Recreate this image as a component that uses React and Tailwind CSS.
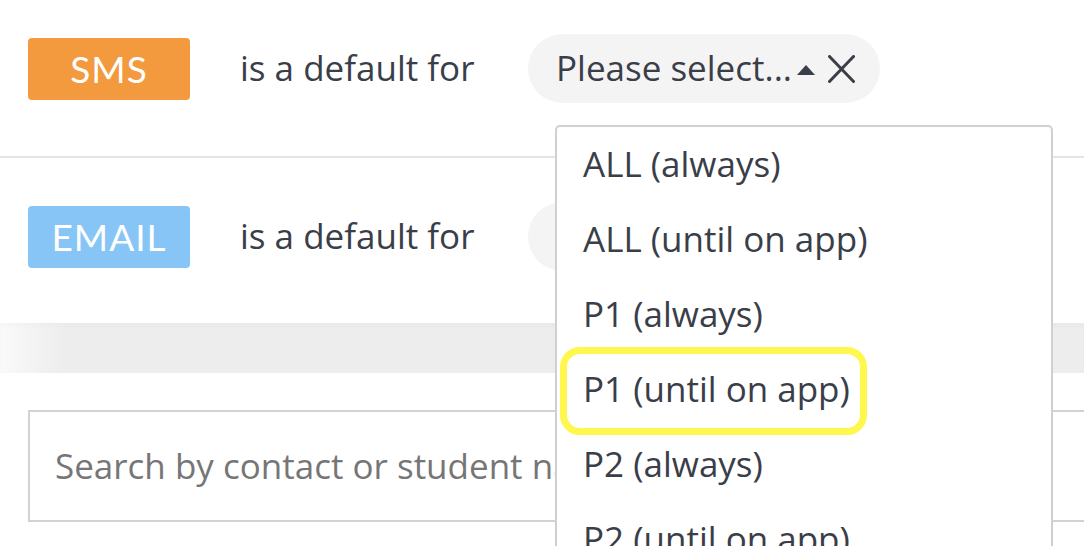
const OPTIONS = [
  'ALL (always)',
  'ALL (until on app)',
  'P1 (always)',
  'P1 (until on app)',
  'P2 (always)',
  'P2 (until on app)',
]

function Badge({ label, color }) {
  return (
    <div
      className={`${color} w-[162px] h-[62px] rounded-[4px] flex items-center justify-center text-white text-[37px] tracking-[1px] shrink-0`}
      style={{ fontFamily: 'Lato, "Noto Sans", sans-serif' }}
    >
      {label}
    </div>
  )
}

function Row({ label, color, pad, children }) {
  return (
    <div className={`flex items-center pl-[28px] ${pad}`}>
      <Badge label={label} color={color} />
      <span className="ml-[50px] w-[288px] text-[35px] text-[#3a3e48]">is a default for</span>
      {children}
    </div>
  )
}

export default function App() {
  return (
    <div
      className="relative w-[1084px] h-[546px] overflow-hidden bg-white"
      style={{ fontFamily: '"Open Sans", "Noto Sans", sans-serif' }}
    >
      <Row label="SMS" color="bg-[#f39a3f]" pad="pt-[34px] pb-[53px] border-b-2 border-[#e4e4e4]">
        <div className="h-[69px] w-[352px] rounded-full bg-[#f4f4f5] flex items-center pl-[28px] pr-[25px] text-[35px] text-[#3a3e48] whitespace-nowrap">
          <span className="flex-1">Please select...</span>
          <svg width="18" height="10" viewBox="0 0 18 10" className="mr-[13px] mt-[2px]">
            <path d="M9 0 L18 10 L0 10 Z" fill="#3a3e48" />
          </svg>
          <svg width="27" height="28" viewBox="0 0 27 28">
            <path d="M1.5 1.5 L25.5 26.5 M25.5 1.5 L1.5 26.5" stroke="#3a3e48" strokeWidth="3" strokeLinecap="round" />
          </svg>
        </div>
      </Row>

      <Row label="EMAIL" color="bg-[#86c5f5]" pad="pt-[44px] pb-[52px]">
        <div className="h-[69px] w-[352px] rounded-full bg-[#f4f4f5]" />
      </Row>

      {/* grey band */}
      <div className="h-[50px] bg-linear-to-r from-[#fafafa] to-[#ededed] to-[6%] shadow-[inset_0_3px_4px_rgba(0,0,0,0.02)]" />

      <div className="pt-[37px] pl-[28px]">
        <div className="w-[1100px] h-[112px] border-2 border-[#d2d2d2] flex items-center pl-[25px] text-[35px] text-[#767676] whitespace-nowrap">
          Search by contact or student name
        </div>
      </div>

      {/* open dropdown */}
      <div className="absolute left-[555px] top-[125px] w-[498px] h-[460px] border-2 border-[#d0d0d0] rounded-[5px] bg-white">
        {OPTIONS.map((opt, i) => (
          <div key={opt} className="relative h-[75px] flex items-center pl-[26px] text-[35px] text-[#3a3e48] whitespace-nowrap">
            {opt}
            {i === 3 && (
              <div className="absolute left-[3px] top-[-5px] w-[307px] h-[88px] border-[7px] border-[#fdf74e] rounded-[20px]" />
            )}
          </div>
        ))}
      </div>
    </div>
  )
}
